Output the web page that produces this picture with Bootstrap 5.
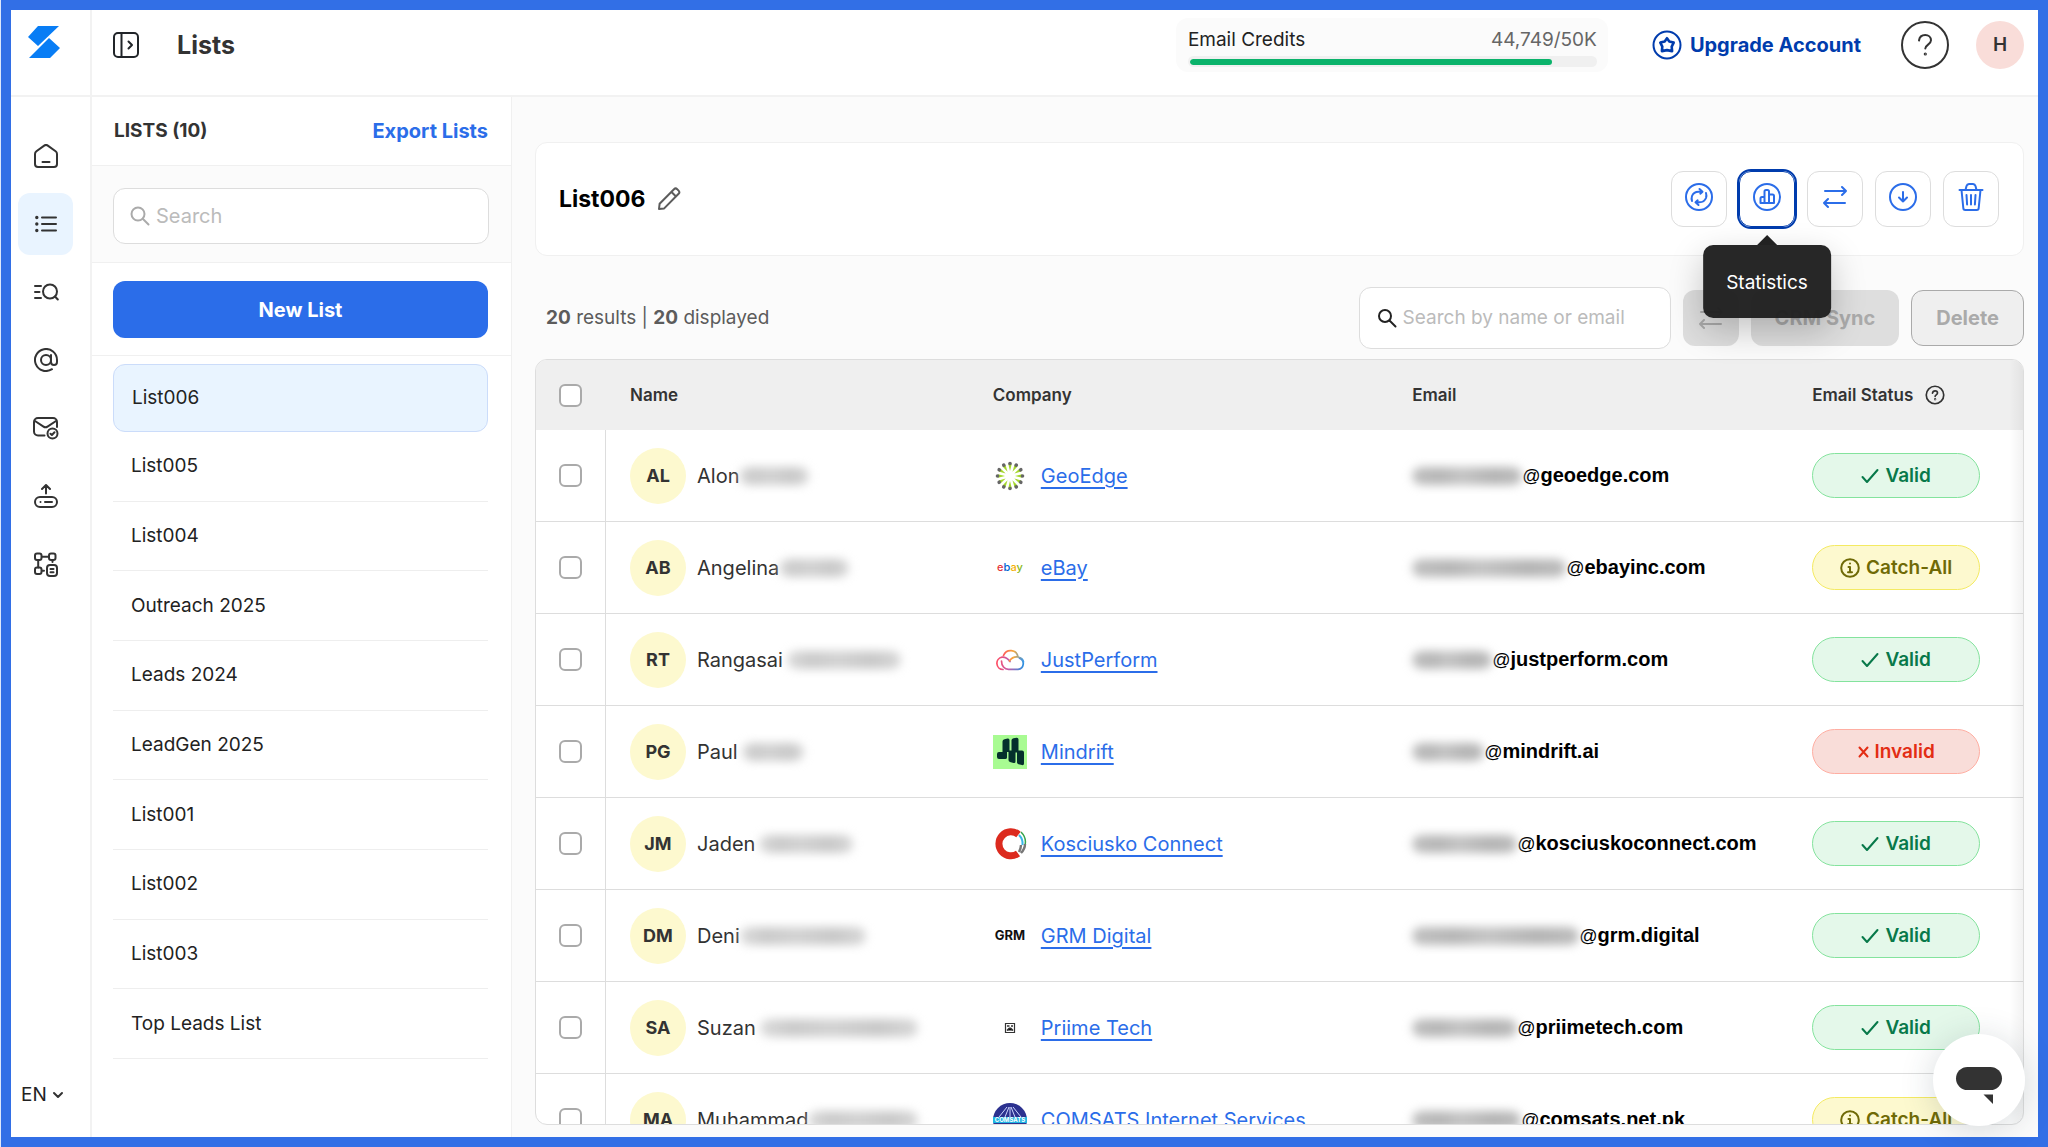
<!DOCTYPE html>
<html lang="en">
<head>
<meta charset="utf-8">
<meta name="viewport" content="width=device-width, initial-scale=1">
<title>Lists</title>
<link href="https://cdn.jsdelivr.net/npm/bootstrap@5.3.0/dist/css/bootstrap.min.css" rel="stylesheet">
<style>
:root{--brand:#2b6de9;--navy:#003cad;--ink:#222;--dark:#333;--line:#f0f0f0;--soft:#fbfbfb}
body{font-family:Inter,"Noto Sans",sans-serif;font-size:19px;line-height:24px;color:var(--ink);background:#dde7fb;padding-left:1px}
svg{display:block;flex:none}
.ico{fill:none;stroke:currentColor;stroke-width:2;stroke-linecap:round;stroke-linejoin:round}
.frame{height:100vh;border:10px solid #326fe6;background:#fff;overflow:hidden}
.topbar{height:87px;border-bottom:2px solid #f2f2f2;padding-right:14px}
.logo-cell{width:81px;height:85px;border-right:2px solid #f2f2f2;padding:16px 0 0 17px}
.top-inner{height:85px;padding:0 0 15px 21px}
.page-title{font-size:25px;line-height:30px;font-weight:700;color:var(--dark);margin-left:38px}
.credits{width:432px;background:var(--soft);border-radius:12px;padding:10px 11px 5px 12px}
.quota{color:#666}
.track{height:11px;border-radius:6px;background:#f0f0f0;padding:3px 0 3px 2px}
.track .progress{height:6px;--bs-progress-bg:transparent;border-radius:3px}
.track .progress-bar{background:#0bb36b;border-radius:3px}
.upgrade{color:var(--navy);font-weight:700;font-size:20px;text-decoration:none;margin:0 40px 0 44px}
.help-btn{width:48px;height:48px;border:0;background:none;color:var(--dark);padding:0;margin-right:27px}
.user{width:48px;height:48px;background:#f9ddd9;color:var(--dark);font-weight:600;border:0}
.rail{width:81px;border-right:2px solid #f2f2f2;padding:28px 0 30px 7px;flex:none}
.rail nav{gap:6px}
.rail nav a{width:55px;height:62px;border-radius:12px;color:var(--dark);display:flex;align-items:center;justify-content:center}
.rail nav a.active{background:#e9f4ff}
.lang{width:43px;border:0;appearance:none;padding:0;margin-left:3px;color:var(--ink);background:url("data:image/svg+xml,%3Csvg xmlns='http://www.w3.org/2000/svg' viewBox='0 0 12 12' fill='none' stroke='%23333' stroke-width='2' stroke-linecap='round' stroke-linejoin='round'%3E%3Cpath d='M2 4l4 4 4-4'/%3E%3C/svg%3E") no-repeat right center/12px}
.panel{width:420px;border-right:1px solid var(--line);flex:none}
.panel-head{height:69px;border-bottom:1px solid var(--line);padding:0 23px 0 22px;color:var(--dark)}
.panel-head h2{font-size:19px;line-height:24px;font-weight:700}
.panel-head a{color:var(--brand);font-size:20px;font-weight:700;text-decoration:none}
.zone{padding:18px 23px 17px 21px;border-bottom:1px solid var(--line)}
.zone.grey{background:var(--soft);padding:22px 22px 18px 21px}
.search{border:1px solid #ddd;border-radius:12px;background:#fff;height:56px;padding:0 16px;gap:6px;color:#aaa}
.search input{border:0;outline:0;background:none;flex:1;min-width:0;padding:0;font-size:20px;color:var(--ink)}
.search input::placeholder{color:#bbb;opacity:1}
.btn-new,.btn-new:hover{height:57px;border-radius:12px;background:var(--brand);color:#fff;font-weight:700;font-size:20px}
.names{padding:8px 23px 78px 21px;min-height:0}
.names a{flex:1 1 0;min-height:40px;border-bottom:1px solid #eee;padding-left:18px;color:var(--ink);text-decoration:none;display:flex;align-items:center}
.names a.active{flex:0 0 68px;background:#e9f4ff;border:1px solid #cbdcfa;border-radius:12px}
.main{background:var(--soft);padding:45px 14px 12px 23px;min-width:0}
.list-card{border:1px solid var(--line);border-radius:12px;background:#fff;height:114px;padding:0 24px 0 23px}
.list-card h2{font-size:23px;line-height:28px;font-weight:700;color:#000}
.rename{color:#5c5c5c}
.acts{gap:12px}
.act{width:56px;height:56px;border:1px solid #ddd;border-radius:12px;background:#fff;color:var(--brand);padding:0 0 4px;display:flex;align-items:center;justify-content:center}
.act.hot{border-color:var(--navy);outline:2px solid var(--navy)}
.tip{position:absolute;top:74px;left:50%;transform:translateX(-50%);z-index:5;background:rgba(32,32,32,.97);color:#fff;border-radius:10px;padding:26px 23px 23px;box-shadow:0 12px 34px rgba(0,0,0,.22)}
.tip::before{content:"";position:absolute;left:50%;top:-10px;margin-left:-10px;border:10px solid transparent;border-top:0;border-bottom-color:#222}
.tools{padding:31px 0 10px 11px;gap:12px;color:#5c5c5c}
.tools .search{width:312px;height:62px;padding:0 17px;color:#222}
.tools .search input{font-size:19px}
.off{height:56px;border-radius:12px;border:0;background:#dedede;color:#aaa;font-size:20px;font-weight:700;padding:0 24px}
.off.line{background:#efefef;border:1px solid #aaa}
.grid-box{border:1px solid #ddd;border-radius:12px;background:#fff;overflow:hidden;min-height:0;position:relative}
.grid-box::after{content:"";position:absolute;top:0;right:0;bottom:0;width:14px;background:linear-gradient(to left,rgba(0,0,0,.05),transparent);pointer-events:none}
.leads{table-layout:fixed;width:100%;border-collapse:separate;border-spacing:0}
.leads th{background:#efefef;height:70px;padding:0 24px;font-size:17px;font-weight:600;color:var(--dark)}
.leads td{height:92px;padding:0 24px;border-bottom:1px solid #ddd}
.leads td:first-child{border-right:1px solid #ddd}
.leads td:first-child,.leads th:first-child{padding:0 0 0 23px}
.leads .form-check-input{width:23px;height:23px;margin:0;border:2px solid #aaa;border-radius:6px;display:block}
.c-pick{width:70px}.c-name{width:24.4%}.c-company{width:28.2%}.c-mail{width:26.9%}
.who{width:56px;height:56px;background:#fdf9cf;font-weight:700;font-size:18px;color:var(--dark);margin-right:11px;flex:none}
.person{color:var(--dark);font-size:20px}
.company{color:var(--brand);font-size:20px;text-decoration:underline;text-underline-offset:4px;text-decoration-thickness:2px;margin-left:14px}
.mail{font-family:"Liberation Sans",Arial,sans-serif;font-weight:700;font-size:20px;color:#000}
.mail .at{font-weight:400;font-size:18px}
.veil{height:18px;border-radius:9px;filter:blur(5px);background:linear-gradient(90deg,#dcdcdc,#cacaca 20%,#d2d2d2 45%,#c8c8c8 75%,#d8d8d8);flex:none}
.mail .veil{background:linear-gradient(90deg,#c0c0c0,#b6b6b6 25%,#c4c4c4 45%,#b4b4b4 75%,#bdbdbd)}
.pill{width:168px;height:45px;border-radius:23px;border:1px solid;font-weight:600;gap:6px}
.pill.ok{background:#e4f8ea;border-color:#84e39d;color:#08794a}
.pill.any{background:#fdf9cf;border-color:#f4ea62;color:#6f6a06}
.pill.bad{background:#f9ddd9;border-color:#ffaea2;color:#e32d14}
.chat{position:fixed;right:23px;bottom:21px;width:92px;height:92px;background:#fff;border:0;padding:0;box-shadow:0 4px 34px rgba(40,60,70,.18);z-index:6}
</style>
</head>
<body>
<div class="frame d-flex flex-column">
  <header class="topbar d-flex flex-shrink-0">
    <a class="logo-cell" href="#" aria-label="Home">
      <svg width="32" height="32" viewBox="0 0 32 32" fill="#087df5"><path d="M10 0h21L10 20 0 11zM21 12l11 10-10 10H1z"/></svg>
    </a>
    <div class="top-inner d-flex align-items-center flex-grow-1">
      <button class="btn p-0 border-0 text-dark" aria-label="Expand menu"><svg class="ico" width="26" height="26" viewBox="0 0 26 26"><rect x="1" y="1" width="24" height="24" rx="4"/><path d="M8.500 1v24M15.500 9.500l3.500 3.500-3.500 3.500"/></svg></button>
      <h1 class="page-title mb-0">Lists</h1>
      <div class="credits ms-auto">
        <div class="d-flex justify-content-between"><span>Email Credits</span><span class="quota">44,749/50K</span></div>
        <div class="track mt-1"><div class="progress" role="progressbar" aria-label="Email credits" aria-valuenow="89" aria-valuemin="0" aria-valuemax="100"><div class="progress-bar" style="width:89%"></div></div></div>
      </div>
      <a href="#" class="upgrade d-flex align-items-center gap-2">
        <svg class="ico" width="30" height="30" viewBox="0 0 30 30"><circle cx="15" cy="15" r="13.500"/><path stroke-width="2.600" d="M15 8.200l2.300 3.200 4.400 1.200-2 4 .4 4.500-5.100-1-5.100 1 .4-4.500-2-4 4.400-1.200z"/></svg>Upgrade Account</a>
      <button class="help-btn" aria-label="Help"><svg class="ico" width="48" height="48" viewBox="0 0 48 48"><circle cx="24" cy="24" r="23"/><path d="M18 19.500c.5-3.500 3-5.500 6.200-5.500 3.300 0 5.800 2.200 5.800 5.300 0 4.200-5.700 4.300-5.700 8.200"/><circle cx="24.300" cy="33" r=".6"/></svg></button>
      <button class="user rounded-circle">H</button>
    </div>
  </header>
  <div class="d-flex flex-grow-1 overflow-hidden">
    <aside class="rail d-flex flex-column justify-content-between">
      <nav class="d-flex flex-column" aria-label="Main">
        <a href="#" aria-label="Home"><svg class="ico" width="24" height="24" viewBox="0 0 24 24"><path d="M1 10a3.500 3.500 0 0 1 1.400-2.800l7.800-5.600a3 3 0 0 1 3.600 0l7.800 5.600A3.500 3.500 0 0 1 23 10v10a3 3 0 0 1-3 3H4a3 3 0 0 1-3-3zM8.500 18h7"/></svg></a>
        <a href="#" class="active" aria-label="Lists"><svg class="ico" width="24" height="24" viewBox="0 0 24 24"><path d="M8 5.500h14M8 12h14M8 18.500h14"/><path stroke-width="3.400" d="M2.800 5.500h.01M2.800 12h.01M2.800 18.500h.01"/></svg></a>
        <a href="#" aria-label="Search"><svg class="ico" width="26" height="24" viewBox="0 0 26 24"><path d="M2 6h6M2 12h4.500M2 18h6"/><circle cx="17" cy="11.500" r="7"/><path d="M22 16.500l2.800 3"/></svg></a>
        <a href="#" aria-label="Email"><svg class="ico" width="24" height="24" viewBox="0 0 24 24"><circle cx="12" cy="12" r="5"/><path d="M17 7v7a3 3 0 0 0 6 0v-2a11 11 0 1 0-5 9.200"/></svg></a>
        <a href="#" aria-label="Verify"><svg class="ico" width="26" height="24" viewBox="0 0 26 24"><path d="M11.500 19.500H5a4 4 0 0 1-4-4V6a4 4 0 0 1 4-4h15a4 4 0 0 1 4 4v5M2 5l8.500 5.600a3.500 3.500 0 0 0 4 0L23 5"/><circle cx="19.500" cy="17.500" r="5"/><path d="M17.500 17.700l1.400 1.300 2.600-2.800"/></svg></a>
        <a href="#" aria-label="Upload"><svg class="ico" width="24" height="24" viewBox="0 0 24 24"><rect x="1" y="13" width="22" height="10" rx="5"/><path d="M11 18h7M6.500 18h.01M12 9.500V1M8 5l4-4 4 4"/></svg></a>
        <a href="#" aria-label="Workflows"><svg class="ico" width="24" height="25" viewBox="0 0 24 25"><rect x="1" y="1.500" width="6.500" height="6.500" rx="2"/><rect x="15" y="1.500" width="6.500" height="6.500" rx="2"/><rect x="1" y="15.500" width="6.500" height="6.500" rx="2"/><rect x="13" y="13" width="10" height="11" rx="3"/><path d="M8 4.700h7M4.200 8.500v7M18.500 8v2M8 18.800h2M16.500 17h3M16.500 20.200h3"/></svg></a>
      </nav>
      <select class="lang" aria-label="Language"><option>EN</option></select>
    </aside>
    <section class="panel d-flex flex-column">
      <div class="panel-head d-flex align-items-center justify-content-between flex-shrink-0"><h2 class="mb-0">LISTS (10)</h2><a href="#">Export Lists</a></div>
      <div class="zone grey"><label class="search d-flex align-items-center"><svg class="ico" width="20" height="20" viewBox="0 0 20 20"><circle cx="8" cy="8" r="6.500"/><path d="M13 13l5.500 5.500"/></svg><input type="text" placeholder="Search" aria-label="Search lists"></label></div>
      <div class="zone"><button class="btn btn-new w-100">New List</button></div>
      <nav class="names d-flex flex-column flex-grow-1" aria-label="Lists">
        <a href="#" class="active">List006</a><a href="#">List005</a><a href="#">List004</a><a href="#">Outreach 2025</a><a href="#">Leads 2024</a><a href="#">LeadGen 2025</a><a href="#">List001</a><a href="#">List002</a><a href="#">List003</a><a href="#">Top Leads List</a>
      </nav>
    </section>
    <main class="main d-flex flex-column flex-grow-1">
      <div class="list-card d-flex align-items-center flex-shrink-0">
        <h2 class="mb-0">List006</h2>
        <button class="btn p-0 border-0 ms-2 rename" aria-label="Rename"><svg class="ico" width="28" height="24" viewBox="0 0 28 24"><path d="M5 22l.6-5.200L20 2.200a2.300 2.300 0 0 1 3.200 0l1.400 1.400a2.300 2.300 0 0 1 0 3.200L10.200 21.400zM17.500 5l4.500 4.500"/></svg></button>
        <div class="acts d-flex ms-auto">
          <button class="act" aria-label="Refresh"><svg class="ico" width="28" height="28" viewBox="0 0 28 28"><circle cx="14" cy="14" r="13"/><path d="M7 18a8 8 0 0 1 0-5c1.200-3 3.500-4.300 6.500-4.300h3.300M14.500 6l3 2.700-2.200 2M21 10a8 8 0 0 1 0 5c-1.200 3-3.500 4.300-6.500 4.300h-3.300M13.500 22l-3-2.700 2.200-2"/></svg></button>
          <div class="position-relative">
            <button class="act hot" aria-label="Statistics"><svg class="ico" width="28" height="28" viewBox="0 0 28 28"><circle cx="14" cy="14" r="13"/><path d="M11.500 20V8.500a1.500 1.500 0 0 1 1.500-1.500h1.500A1.500 1.500 0 0 1 16 8.500V20M11.500 14H9a1.500 1.500 0 0 0-1.500 1.500V20h13.500v-7a1.500 1.500 0 0 0-1.500-1.500H16"/></svg></button>
            <div class="tip" role="tooltip">Statistics</div>
          </div>
          <button class="act" aria-label="Transfer"><svg class="ico" width="24" height="24" viewBox="0 0 24 24"><path d="M2 6h21M19 2l4 4-4 4M22 18H1M5 14l-4 4 4 4"/></svg></button>
          <button class="act" aria-label="Download"><svg class="ico" width="28" height="28" viewBox="0 0 28 28"><circle cx="14" cy="14" r="13"/><path d="M14 9v9.500M10 14.500l4 4 4-4"/></svg></button>
          <button class="act" aria-label="Delete list"><svg class="ico" width="26" height="28" viewBox="0 0 26 28"><path d="M1.500 7h23M3.500 7l1.800 18a2 2 0 0 0 2 2h11.400a2 2 0 0 0 2-2L22.500 7M7.500 7l1-4a3 3 0 0 1 2.500-2h4a3 3 0 0 1 2.500 2l1 4M8.500 12l.6 9.500M13 12v9.500M17.500 12l-.6 9.500"/></svg></button>
        </div>
      </div>
      <div class="tools d-flex align-items-center flex-shrink-0">
        <div class="me-auto"><b>20</b> results | <b>20</b> displayed</div>
        <label class="search d-flex align-items-center"><svg class="ico" width="20" height="20" viewBox="0 0 20 20"><circle cx="8" cy="8" r="6"/><path d="M12.500 12.500l6 6"/></svg><input type="text" placeholder="Search by name or email" aria-label="Search by name or email"></label>
        <button class="off px-3" disabled aria-label="Move"><svg class="ico" width="24" height="24" viewBox="0 0 24 24"><path d="M2 6h21M19 2l4 4-4 4M22 18H1M5 14l-4 4 4 4"/></svg></button>
        <button class="off" disabled>CRM Sync</button>
        <button class="off line" disabled>Delete</button>
      </div>
      <div class="grid-box flex-grow-1">
        <table class="leads">
          <colgroup><col class="c-pick"><col class="c-name"><col class="c-company"><col class="c-mail"><col></colgroup>
          <thead><tr><th><input class="form-check-input" type="checkbox" aria-label="Select all"></th><th>Name</th><th>Company</th><th>Email</th><th><div class="d-flex align-items-center gap-2">Email Status<svg class="ico ms-1" width="20" height="20" viewBox="0 0 48 48"><g stroke-width="4"><circle cx="24" cy="24" r="21"/><path d="M18 19.500c.5-3.500 3-5.500 6.200-5.500 3.300 0 5.800 2.200 5.800 5.300 0 4.200-5.700 4.300-5.700 8.200"/><circle cx="24.300" cy="34" r=".8"/></g></svg></div></th></tr></thead>
          <tbody id="rows"></tbody>
        </table>
      </div>
    </main>
  </div>
</div>
<button class="chat rounded-circle" aria-label="Open chat"><svg width="92" height="92" viewBox="0 0 92 92" fill="#333"><rect x="23" y="33" width="46" height="23" rx="11.500"/><path d="M50.500 60.500h9.500V70z"/></svg></button>
<script>
const rays = Array.from({length: 12}, (_, i) => `<g transform="rotate(${i * 30} 17 17)"><path d="M17 12L15.300 5h3.400z" fill="#a4d62c"/><circle cx="17" cy="4.500" r="1.800" fill="#666"/></g>`).join('');
const logos = {
  geo: rays,
  ebay: '<text x="17" y="20" text-anchor="middle" font-size="11" font-weight="500"><tspan fill="#e53238">e</tspan><tspan fill="#0064d2">b</tspan><tspan fill="#f5af02">a</tspan><tspan fill="#86b817">y</tspan></text>',
  cloud: '<defs><linearGradient id="cg"><stop offset="0" stop-color="#ff4d63"/><stop offset=".4" stop-color="#c85aa5"/><stop offset="1" stop-color="#2c8fe0"/></linearGradient><linearGradient id="ct"><stop offset="0" stop-color="#ff5a5a"/><stop offset=".5" stop-color="#f5a83a"/><stop offset="1" stop-color="#3d9be9"/></linearGradient></defs><g fill="none" stroke-width="1.700" stroke-linecap="round"><path stroke="url(#cg)" d="M10 26.500a6.200 6.200 0 0 1-1-12.300c3.500-.2 6 1.500 8 4.300M8.500 18c0 5 3 8.300 7 8.300H25a5.800 5.800 0 0 0 1.500-11.200"/><path stroke="url(#ct)" d="M10.500 12.500c3-7 13-6.500 14.500 1.500 3.500.5 5 2.500 5.500 5M16.500 18c2-3 5-4.500 8.500-4"/></g>',
  mind: '<path fill="#a8fb92" d="M0 0h34v34H0z"/><path fill="#04302c" d="M4 19q0-2 2-2h3.500V6.500q0-2 2-2.300l3-.7q2-.3 2 1.500v10.500h2V5.200q0-1.700 2-2l3-.4q2-.2 2 1.700v11h3.500q2 0 2 2V28.500q0 2-2 1.600l-3.500-.8q-1.500-.4-1.500-2V17.500h-1.500v9q0 2-2 1.500l-3.500-1q-1.500-.4-1.500-2v-8H14v5.500q0 1.700-2 1.600L6 24q-2 0-2-2z"/>',
  kos: '<path fill="none" stroke="#dc2a1e" stroke-width="7" d="M25.500 7.500A12 12 0 1 0 25 26.500"/><path fill="none" stroke="#37a34a" stroke-width="1.500" d="M28 5c4 4 5 9 4 13"/><path fill="none" stroke="#39b6e8" stroke-width="2" d="M26 8c3 3 4 6 3.500 10"/><path fill="none" stroke="#777" stroke-width="2.400" d="M32 17c0 4-2 7-4 9M28 18c0 3-1 5-2 7"/>',
  grm: '<text x="17" y="21" text-anchor="middle" font-size="13" font-weight="700" fill="#111">GRM</text>',
  priime: '<path fill="none" stroke="#333" stroke-width="1.200" d="M12.500 12.500h9v9h-9z"/><path stroke="#333" stroke-width="1.500" d="M14 15h2.500M18 15h2M14 19.500l2-2h2l2 2M16 17.300h2"/>',
  comsats: '<circle cx="17" cy="17" r="17" fill="#2c318f"/><path fill="none" stroke="#cfd6ff" d="M14 4L6 14M16 4l-4 10M18 4l4 10M20 4l8 10M17 4v10"/><path fill="#1fb5e2" d="M0 14h34v6H0z"/><text x="17" y="19" text-anchor="middle" font-size="6" font-weight="700" fill="#fff">COMSATS</text>'
};
const marks = {
  ok: ['Valid', '<svg class="ico" width="18" height="16" viewBox="0 0 18 16"><path d="M1.500 9l4.500 5L16.500 2"/></svg>'],
  any: ['Catch-All', '<svg class="ico" width="20" height="20" viewBox="0 0 20 20"><circle cx="10" cy="10" r="8.800"/><path d="M8.500 9H10v5M8 14.200h4M10 5.600h.01"/></svg>'],
  bad: ['Invalid', '<svg class="ico" width="11" height="12" viewBox="0 0 11 12"><path d="M1.500 1.500l8 9M9.500 1.500l-8 9"/></svg>']
};
const rows = [
  ['AL', 'Alon', 0, 70, 'geo', 'GeoEdge', 110, 'geoedge.com', 'ok'],
  ['AB', 'Angelina', 0, 70, 'ebay', 'eBay', 154, 'ebayinc.com', 'any'],
  ['RT', 'Rangasai', 4, 114, 'cloud', 'JustPerform', 80, 'justperform.com', 'ok'],
  ['PG', 'Paul', 4, 62, 'mind', 'Mindrift', 72, 'mindrift.ai', 'bad'],
  ['JM', 'Jaden', 4, 94, 'kos', 'Kosciusko Connect', 105, 'kosciuskoconnect.com', 'ok'],
  ['DM', 'Deni', 0, 126, 'grm', 'GRM Digital', 167, 'grm.digital', 'ok'],
  ['SA', 'Suzan', 4, 158, 'priime', 'Priime Tech', 105, 'priimetech.com', 'ok'],
  ['MA', 'Muhammad', 0, 110, 'comsats', 'COMSATS Internet Services', 109, 'comsats.net.pk', 'any']
];
document.getElementById('rows').innerHTML = rows.map(([ini, name, gap, hide, logo, company, mailHide, domain, state]) => `
<tr><td><input class="form-check-input" type="checkbox" aria-label="Select ${name}"></td>
<td><div class="d-flex align-items-center"><span class="who rounded-circle d-flex align-items-center justify-content-center">${ini}</span><span class="person">${name}</span><span class="veil" style="width:${hide}px;margin-left:${gap}px"></span></div></td>
<td><div class="d-flex align-items-center"><svg width="34" height="34" viewBox="0 0 34 34">${logos[logo]}</svg><a href="#" class="company text-nowrap">${company}</a></div></td>
<td><div class="mail d-flex align-items-center"><span class="veil" style="width:${mailHide}px"></span><span class="text-nowrap"><span class="at">@</span>${domain}</span></div></td>
<td><span class="pill ${state} d-flex align-items-center justify-content-center">${marks[state][1]}${marks[state][0]}</span></td></tr>`).join('');
</script>
<script src="https://cdn.jsdelivr.net/npm/bootstrap@5.3.0/dist/js/bootstrap.bundle.min.js"></script>
</body>
</html>
